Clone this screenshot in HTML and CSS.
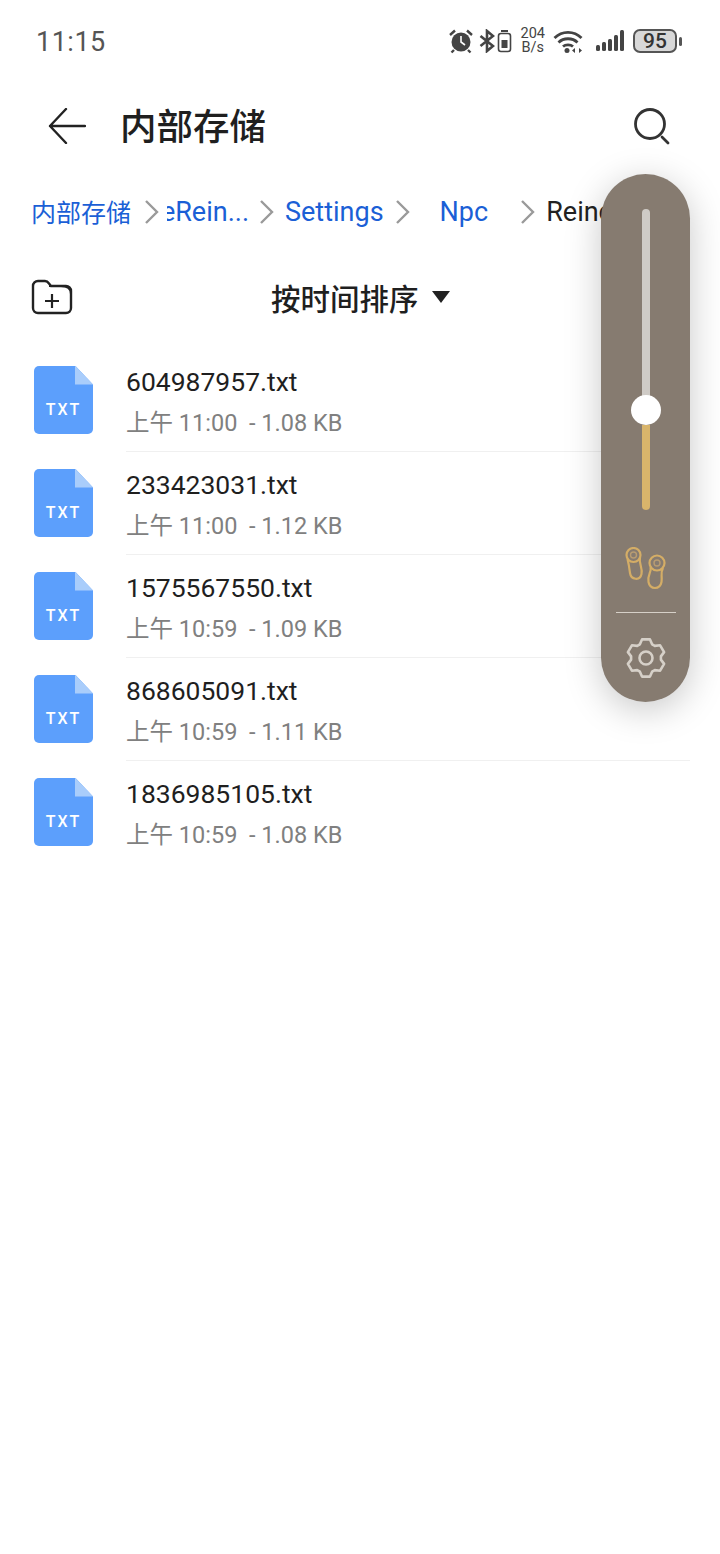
FILE: index.html
```html
<!DOCTYPE html>
<html lang="zh-CN">
<head>
  <meta charset="UTF-8" />
  <meta name="viewport" content="width=device-width, initial-scale=1.0" />
  <title>内部存储</title>
  <link rel="stylesheet" href="styles.css">
</head>
<body>
  <div class="status-bar">
    <span class="clock">11:15</span>
    <div class="status-icons">
      <svg width="26" height="26" viewBox="0 0 26 26"><circle cx="13" cy="14" r="9.5" fill="#444"/><path d="M13 8v6l4 3" fill="none" stroke="#fff" stroke-width="1.6"/><path d="M2 7l5-4.500M24 7l-5-4.500M6 22l-2.500 2.500M20 22l2.500 2.500" stroke="#444" stroke-width="2.400"/></svg>
      <svg class="gap-bt" width="16" height="24" viewBox="0 0 16 24"><path d="M1.500 7L14 17l-6 5V2l6 5L1.500 17" fill="none" stroke="#444" stroke-width="2.600"/></svg>
      <svg class="gap-batt" width="15" height="24" viewBox="0 0 15 24"><path d="M4 2h7" stroke="#444" stroke-width="2"/><rect x="1.500" y="4.500" width="12" height="18" rx="2.500" fill="none" stroke="#444" stroke-width="1.600"/><rect x="4.500" y="11" width="6" height="8" fill="#444"/></svg>
      <div class="speed">204<br>B/s</div>
      <svg width="30" height="24" viewBox="0 0 30 24"><path d="M1.500 9c7.500-7.500 19.500-7.500 27 0M5.500 13.500c5-5 14-5 19 0M10 17.500c2.500-2.200 7.500-2.200 10 0" fill="none" stroke="#444" stroke-width="2.800"/><circle cx="14" cy="21.500" r="2.500" fill="#444"/><path d="M19 21.500l3-2.500v5zM29 21.500l-3-2.500v5z" fill="#444"/></svg>
      <svg class="gap-sig" width="30" height="24" viewBox="0 0 30 24"><rect x="1" y="16" width="4" height="6" rx="1.500" fill="#444"/><rect x="7" y="13" width="4" height="9" rx="1.500" fill="#444"/><rect x="13" y="10" width="4" height="12" rx="1.500" fill="#444"/><rect x="19" y="6" width="4" height="16" rx="1.500" fill="#444"/><rect x="25" y="1" width="4" height="21" rx="1.500" fill="#444"/></svg>
      <div class="battery"><span class="battery-body">95</span><span class="battery-tip"></span></div>
    </div>
  </div>

  <header class="top-bar">
    <svg class="back" width="38" height="36" viewBox="0 0 38 36"><path d="M37 18H2M18 1L2 18l16 17" fill="none" stroke="#222" stroke-width="2.400" stroke-linecap="round" stroke-linejoin="round"/></svg>
    <h1>内部存储</h1>
    <svg class="search" width="38" height="38" viewBox="0 0 38 38"><circle cx="17" cy="17" r="14.500" fill="none" stroke="#333" stroke-width="2.800"/><path d="M29 30l6 6" stroke="#333" stroke-width="2.800" stroke-linecap="round"/></svg>
  </header>

  <nav class="crumbs">
    <span class="crumb first">内部存储</span>
    <svg class="chev" width="16" height="26" viewBox="0 0 16 26"><path d="M2 2l11 11L2 24" fill="none" stroke="#9a9a9a" stroke-width="2.400"/></svg>
    <span class="crumb cut"><span>eRein...</span></span>
    <svg class="chev" width="16" height="26" viewBox="0 0 16 26"><path d="M2 2l11 11L2 24" fill="none" stroke="#9a9a9a" stroke-width="2.400"/></svg>
    <span class="crumb settings">Settings</span>
    <svg class="chev" width="16" height="26" viewBox="0 0 16 26"><path d="M2 2l11 11L2 24" fill="none" stroke="#9a9a9a" stroke-width="2.400"/></svg>
    <span class="crumb npc">Npc</span>
    <svg class="chev" width="16" height="26" viewBox="0 0 16 26"><path d="M2 2l11 11L2 24" fill="none" stroke="#9a9a9a" stroke-width="2.400"/></svg>
    <span class="crumb current">Reinc</span>
  </nav>

  <div class="toolbar">
    <svg class="new-folder" width="42" height="36" viewBox="0 0 42 36"><path d="M2 7a5 5 0 0 1 5-5h7c2 0 3 1 4 2.500L20 7h15a5 5 0 0 1 5 5v17a5 5 0 0 1-5 5H7a5 5 0 0 1-5-5z" fill="none" stroke="#222" stroke-width="2.400"/><path d="M18 7h12c5 0 10 1 10 8" fill="none" stroke="#222" stroke-width="2"/><path d="M14 22h14M21 15v14" stroke="#222" stroke-width="2.200"/></svg>
    <div class="sort">按时间排序<span class="sort-arrow"></span></div>
  </div>

  <ul class="files">
    <li class="file">
      <div class="file-icon"><span>TXT</span></div>
      <div class="file-info"><div class="file-name">604987957.txt</div><div class="file-meta">上午 11:00&nbsp; - 1.08 KB</div></div>
    </li>
    <li class="file">
      <div class="file-icon"><span>TXT</span></div>
      <div class="file-info"><div class="file-name">233423031.txt</div><div class="file-meta">上午 11:00&nbsp; - 1.12 KB</div></div>
    </li>
    <li class="file">
      <div class="file-icon"><span>TXT</span></div>
      <div class="file-info"><div class="file-name">1575567550.txt</div><div class="file-meta">上午 10:59&nbsp; - 1.09 KB</div></div>
    </li>
    <li class="file">
      <div class="file-icon"><span>TXT</span></div>
      <div class="file-info"><div class="file-name">868605091.txt</div><div class="file-meta">上午 10:59&nbsp; - 1.11 KB</div></div>
    </li>
    <li class="file">
      <div class="file-icon"><span>TXT</span></div>
      <div class="file-info"><div class="file-name">1836985105.txt</div><div class="file-meta">上午 10:59&nbsp; - 1.08 KB</div></div>
    </li>
  </ul>

  <!-- floating volume panel, sits over the page -->
  <aside class="volume">
    <div class="slider">
      <div class="track-top"></div>
      <div class="track-bottom"></div>
      <div class="thumb"></div>
    </div>
    <svg class="buds" width="42" height="44" viewBox="0 0 42 44"><g fill="none" stroke="#d4ad66" stroke-width="2.200"><circle cx="8.500" cy="8" r="7"/><path d="M2.500 12C4 18 4.500 22 5 26c1 7 10 8 11.500 1C18 21 13.500 17 15 10"/><circle cx="32" cy="16" r="7.500"/><path d="M25.500 20c1.500 5-3.500 8-2 15 1.500 8 11.500 8 13 0 1-6-1.500-9 1.500-14"/></g><g fill="none" stroke="#b89c72" stroke-width="1.400"><circle cx="8.500" cy="8" r="3"/><circle cx="32" cy="16" r="3"/></g></svg>
    <div class="divider"></div>
    <svg class="gear" width="40" height="40" viewBox="0 0 40 40"><path d="M13.900 6.300L16 1.400h8l2.100 4.900 2.700 1.600 5.300-.6 4 6.800-3.200 4.300v3.200l3.200 4.300-4 6.800-5.300-.6-2.700 1.600-2.100 4.900h-8l-2.100-4.900-2.700-1.600-5.300.6-4-6.800 3.200-4.300v-3.200L1.900 14.100l4-6.800 5.300.6z" fill="none" stroke="#d6d0c8" stroke-width="2.600" stroke-linejoin="round"/><circle cx="20" cy="20" r="6.500" fill="none" stroke="#d6d0c8" stroke-width="2.600"/></svg>
  </aside>
</body>
</html>
```

FILE: styles.css
```css
* {
  box-sizing: border-box;
}

body {
  margin: 0;
  width: 720px;
  height: 1554px;
  background: #fff;
  font-family: Roboto, "Noto Sans CJK SC", sans-serif;
  color: #1f1f1f;
  position: relative;
  overflow: hidden;
}

.status-bar {
  height: 82px;
  padding: 0 38px 0 36px;
  display: flex;
  justify-content: space-between;
  align-items: center;
}

.clock {
  font-size: 27px;
  letter-spacing: 0.5px;
  color: #555;
  margin-top: 2px;
}

.status-icons {
  display: flex;
  align-items: center;
  gap: 5px;
}

.gap-bt {
  margin-left: 0;
}

.gap-batt {
  margin-left: -3px;
}

.gap-sig {
  margin-left: 7px;
}

.speed {
  font-size: 14.500px;
  line-height: 14px;
  text-align: center;
  color: #444;
  margin: 0 3px 0 4px;
}

.battery {
  display: flex;
  align-items: center;
  gap: 2px;
  margin-left: 3px;
}

.battery-body {
  width: 44px;
  height: 24px;
  border: 2px solid #555;
  border-radius: 7px;
  background: #d8d8d8;
  color: #333;
  font-size: 21px;
  font-weight: 500;
  line-height: 20px;
  text-align: center;
}

.battery-tip {
  width: 3px;
  height: 9px;
  border-radius: 2px;
  background: #555;
}

.top-bar {
  height: 88px;
  padding: 0 48px;
  display: flex;
  align-items: center;
}

.back {
  flex: none;
}

.top-bar h1 {
  margin: 0 0 4px 34px;
  font-size: 36.500px;
  font-weight: 500;
  flex: 1;
}

.search {
  margin-right: 1px;
}

.crumbs {
  height: 84px;
  padding-left: 31px;
  display: flex;
  align-items: center;
  white-space: nowrap;
  overflow: hidden;
}

.crumb {
  font-size: 27px;
  color: #1b5fd6;
}

.first {
  font-size: 25px;
  margin: 0 1px 2px 0;
}

.chev {
  flex: none;
  margin: 0 10px 0 12px;
}

.cut {
  margin: 0 -2px 0 -3px;
  flex: none;
  width: 82px;
  overflow: hidden;
  display: flex;
  justify-content: flex-end;
}

.settings {
  margin: 0 -1px 0 0;
}

.npc {
  margin: 0 20px 0 19px;
}

.current {
  color: #222;
}

.toolbar {
  height: 86px;
  padding: 0 31px;
  display: flex;
  align-items: center;
  position: relative;
}

.sort {
  position: absolute;
  left: 271px;
  font-size: 29.500px;
  font-weight: 500;
  display: flex;
  align-items: center;
}

.sort-arrow {
  margin-left: 13px;
  border: 9px solid transparent;
  border-top: 12px solid #222;
  border-bottom: 0;
}

.files {
  list-style: none;
  margin: 0;
  padding: 9px 30px 0 34px;
}

.file {
  height: 103px;
  display: flex;
  align-items: center;
}

.file-icon {
  flex: none;
  position: relative;
  width: 59px;
  height: 68px;
  margin-bottom: 2px;
  border-radius: 5px;
  background: #5c9ffc;
  color: #fff;
  font-size: 16px;
  font-weight: 500;
  letter-spacing: 2px;
  text-align: center;
  padding-top: 34px;
}

/* page corner: white cut-out and the lighter fold on top of it */
.file-icon::before,
.file-icon::after {
  content: "";
  position: absolute;
  top: 0;
  right: 0;
  width: 18px;
  height: 19px;
}

.file-icon::before {
  background: #fff;
  clip-path: polygon(0 0, 100% 0, 100% 100%);
}

.file-icon::after {
  background: #a9cdfb;
  clip-path: polygon(0 0, 100% 100%, 0 100%);
}

.file-info {
  flex: 1;
  height: 103px;
  margin-left: 33px;
  padding-top: 15px;
  border-bottom: 1px solid #f0f0f0;
}

.file:last-child .file-info {
  border-bottom: 0;
}

.file-name {
  font-size: 26.500px;
  line-height: 36px;
}

.file-meta {
  font-size: 23.500px;
  line-height: 40px;
  margin-top: 3px;
  color: #808080;
}

.volume {
  position: absolute;
  left: 601px;
  top: 174px;
  width: 89px;
  height: 528px;
  border-radius: 45px;
  background: #867b70;
  box-shadow: 0 8px 36px rgba(0, 0, 0, 0.22);
  display: flex;
  flex-direction: column;
  align-items: center;
  padding-top: 35px;
}

.slider {
  position: relative;
  width: 8px;
  height: 301px;
}

.track-top {
  height: 192px;
  border-radius: 4px 4px 0 0;
  background: #cfcbc6;
}

.track-bottom {
  height: 85px;
  margin-top: 24px;
  border-radius: 0 0 4px 4px;
  background: #d9b56b;
}

.thumb {
  position: absolute;
  left: -11px;
  top: 186px;
  width: 30px;
  height: 30px;
  border-radius: 50%;
  background: #fff;
}

.buds {
  margin-top: 37px;
}

.divider {
  width: 60px;
  height: 1px;
  margin-top: 21px;
  background: #d6d0c8;
}

.gear {
  margin-top: 25px;
}
```
